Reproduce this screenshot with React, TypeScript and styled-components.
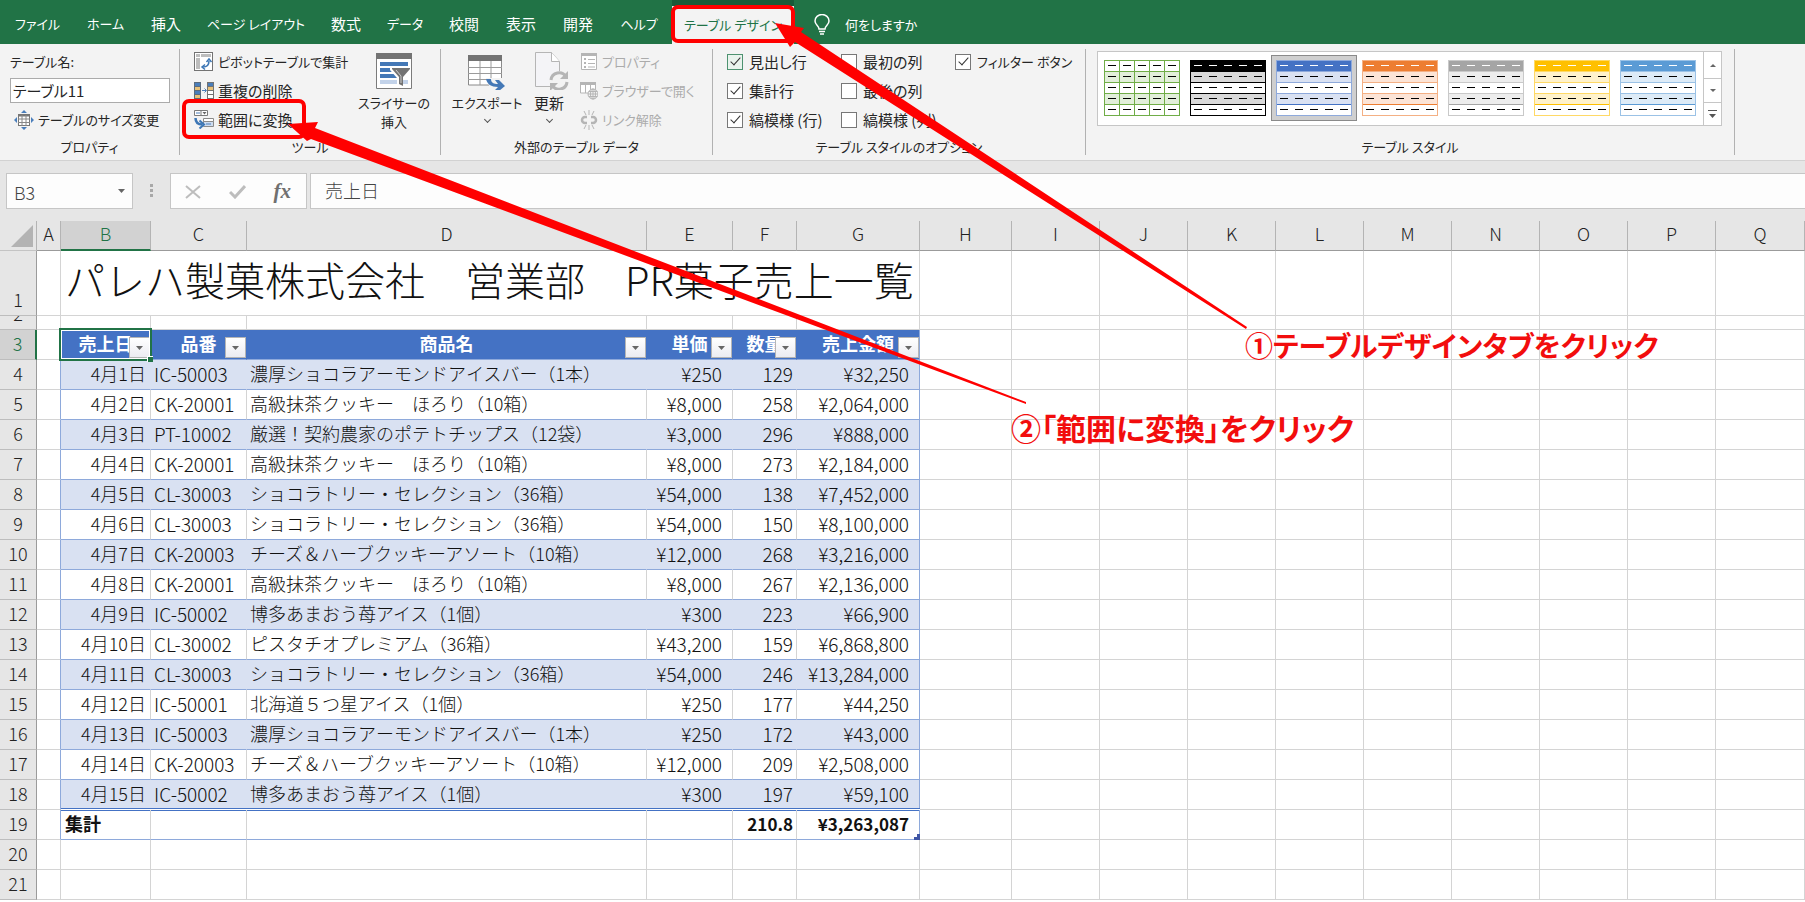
import React from 'react';
import styled, { createGlobalStyle, css } from 'styled-components';

const GlobalStyle = createGlobalStyle`
  *, *::before, *::after { box-sizing: border-box; }
  body {
    margin: 0;
    overflow: hidden;
    font-family: "Noto Sans CJK JP", "Noto Sans", sans-serif;
    color: #262626;
  }
  button, input { font: inherit; color: inherit; }
  button { background: none; border: 0; padding: 0; }
`;

const Workbook = styled.div`
  position: relative;
  display: flex;
  flex-direction: column;
  height: 100vh;
  overflow: hidden;
  background: #fff;
`;

/* ---------- tab strip ---------- */

const TabStrip = styled.nav`
  display: flex;
  flex: none;
  height: 44px;
  padding-left: 2px;
  background: #217346;
  color: #fff;
`;

const uiText = css<{ $kana?: boolean }>`
  font-size: ${(p) => (p.$kana ? 13 : 15)}px;
  font-weight: 400;
  font-feature-settings: "palt";
  white-space: nowrap;
`;

const Tab = styled.button<{ $w: number; $kana?: boolean; $active?: boolean }>`
  ${uiText}
  width: ${(p) => p.$w}px;
  line-height: 37px;
  padding-top: ${(p) => (p.$active ? 0 : 3)}px;
  ${(p) =>
    p.$active &&
    css`
      background: #f3f3f3;
      color: #217346;
      border-top: 6px solid #1b5a38;
      line-height: 32px;
    `}
`;

const TellMe = styled.button`
  ${uiText}
  display: flex;
  align-items: center;
  gap: 15px;
  margin-left: 20px;
  padding-top: 4px;
  font-size: 13px;
`;

/* ---------- ribbon ---------- */

const Ribbon = styled.div`
  display: flex;
  flex: none;
  height: 117px;
  padding-top: 5px;
  background: #f3f3f3;
  border-bottom: 1px solid #d2d2d2;
`;

const Group = styled.section<{ $w: number; $left: number }>`
  display: flex;
  flex-direction: column;
  justify-content: space-between;
  flex: none;
  width: ${(p) => p.$w}px;
  height: 106px;
  padding-left: ${(p) => p.$left}px;
  border-right: 1px solid #b1b1b1;
`;

const GroupBody = styled.div`
  display: flex;
  align-items: flex-start;
`;

const GroupLabel = styled.h2<{ $left: number }>`
  ${uiText}
  margin: 0;
  margin-left: -${(p) => p.$left}px;
  text-align: center;
  font-size: 13px;
  line-height: 16px;
  height: 16px;
`;

const Stack = styled.div<{ $w?: number }>`
  display: flex;
  flex-direction: column;
  width: ${(p) => (p.$w ? p.$w + 'px' : 'auto')};
  margin-top: -2px;
`;

const FieldLabel = styled.label`
  ${uiText}
  line-height: 29px;
  height: 29px;
`;

const NameField = styled.input`
  ${uiText}
  width: 160px;
  height: 25px;
  margin: 2px 0;
  padding: 0 2px;
  font-size: 15px;
  background: #fff;
  border: 1px solid #ababab;
`;

const Command = styled.button<{ $kana?: boolean; $off?: boolean; $indent?: number }>`
  ${uiText}
  display: flex;
  align-items: center;
  gap: 4px;
  height: 29px;
  padding-left: ${(p) => p.$indent || 0}px;
  color: ${(p) => (p.$off ? '#ababab' : '#262626')};
  svg { flex: none; }
`;

const BigCommand = styled.button<{ $w: number; $kana?: boolean }>`
  ${uiText}
  display: flex;
  flex-direction: column;
  align-items: center;
  width: ${(p) => p.$w}px;
  padding-top: 3px;
  line-height: 19px;
  svg { flex: none; margin-bottom: 3px; }
`;

const Chevron = styled.span`
  width: 5px;
  height: 5px;
  margin-top: 5px;
  border: solid #555;
  border-width: 0 1px 1px 0;
  transform: rotate(45deg);
`;

const Option = styled.label<{ $kana?: boolean }>`
  ${uiText}
  display: flex;
  align-items: center;
  gap: 6px;
  height: 29px;
`;

const CheckBox = styled.input<{ $hot?: boolean }>`
  appearance: none;
  display: grid;
  place-items: center;
  width: 16px;
  height: 16px;
  margin: 0;
  background: ${(p) => (p.$hot ? '#e9f3ed' : '#fff')};
  border: 1px solid ${(p) => (p.$hot ? '#4d9270' : '#777')};
  &:checked::after {
    content: "";
    width: 5px;
    height: 10px;
    margin-top: -3px;
    border: solid #333;
    border-width: 0 1px 1px 0;
    transform: rotate(42deg);
  }
`;

const Gallery = styled.div`
  display: flex;
  height: 75px;
  margin-top: 2px;
  background: #fff;
  border: 1px solid #c6c6c6;
`;

const Swatches = styled.div`
  display: flex;
  padding: 3px 2px 0 1px;
`;

const Swatch = styled.button<{ $selected?: boolean }>`
  display: grid;
  place-items: center;
  width: 86px;
  height: 66px;
  border: 1px solid ${(p) => (p.$selected ? '#8a8a8a' : 'transparent')};
  background: ${(p) => (p.$selected ? '#cfcfcf' : 'transparent')};
`;

const GalleryScroll = styled.div`
  display: grid;
  grid-template-rows: 26px 24px 23px;
  width: 18px;
  border-left: 1px solid #c6c6c6;
`;

const ScrollButton = styled.button`
  display: grid;
  place-items: center;
  & + & { border-top: 1px solid #c6c6c6; }
`;

/* ---------- formula bar ---------- */

const FormulaBar = styled.div`
  display: flex;
  flex: none;
  height: 60px;
  padding: 12px 0 12px 6px;
  background: #e6e6e6;
  color: #444;
  font-size: 18px;
  font-weight: 300;
`;

const Box = styled.div`
  display: flex;
  align-items: center;
  background: #fdfdfd;
  border: 1px solid #c6c6c6;
`;

const NameBox = styled(Box)`
  width: 127px;
  padding-right: 7px;
  input {
    flex: 1;
    min-width: 0;
    padding: 2px 0 0 7px;
    border: 0;
    background: none;
  }
`;

const Grip = styled.span`
  width: 3px;
  height: 13px;
  margin: 11px 17px 0 17px;
  background: repeating-linear-gradient(#a8a8a8 0 3px, transparent 3px 5px);
`;

const EditButtons = styled(Box)`
  justify-content: space-between;
  width: 137px;
  margin-right: 3px;
  padding: 0 15px 0 14px;
`;

const FxButton = styled.button`
  font: italic 700 21px/24px "Liberation Serif", serif;
  color: #707070;
`;

const FormulaField = styled.input`
  flex: 1;
  min-width: 0;
  padding: 0 14px 3px;
  background: #fdfdfd;
  border: 1px solid #c6c6c6;
  border-right: 0;
`;

/* ---------- sheet ---------- */

const SheetArea = styled.main`
  flex: 1;
  min-height: 0;
  overflow: hidden;
`;

const Sheet = styled.table`
  width: 100%;
  min-width: 1804px;
  table-layout: fixed;
  border-collapse: separate;
  border-spacing: 0;
  font-size: 18px;
  font-weight: 300;
  color: #111;
  th, td { padding: 0; }
  th { font-weight: inherit; }
`;

const ColHead = styled.th<{ $selected?: boolean }>`
  height: 30px;
  background: ${(p) => (p.$selected ? '#d2d2d2' : '#e6e6e6')};
  color: ${(p) => (p.$selected ? '#217346' : '#222')};
  border-right: 1px solid #b4b4b4;
  border-bottom: ${(p) => (p.$selected ? '2px solid #217346' : '1px solid #9b9b9b')};
  line-height: 25px;
  vertical-align: top;
`;

const Corner = styled.th`
  height: 30px;
  background: #e6e6e6;
  border-right: 1px solid #b4b4b4;
  border-bottom: 1px solid #c4c4c4;
  svg { display: block; margin-left: auto; margin-right: 3px; }
`;

const RowHead = styled.th<{ $selected?: boolean }>`
  background: ${(p) => (p.$selected ? '#d2d2d2' : '#e6e6e6')};
  color: ${(p) => (p.$selected ? '#217346' : '#222')};
  border-right: ${(p) => (p.$selected ? '2px solid #217346' : '1px solid #9b9b9b')};
  border-bottom: 1px solid #bdbdbd;
`;

type Kind = 'plain' | 'head' | 'band' | 'white' | 'last' | 'total';

const Cell = styled.td<{ $kind?: Kind; $edge?: boolean }>`
  position: relative;
  border-right: 1px solid #d4d4d4;
  border-bottom: 1px solid #d4d4d4;
  ${(p) => p.$kind && p.$kind !== 'plain' && css`border-bottom-color: #8ea9db;`}
  ${(p) => p.$kind === 'head' && css`
    background: #4472c4;
    border-right-color: #4472c4;
    color: #fff;
    font-weight: 700;
  `}
  ${(p) => (p.$kind === 'band' || p.$kind === 'last') && css`
    background: #d9e1f2;
    border-right-color: #d9e1f2;
  `}
  ${(p) => p.$kind === 'last' && css`
    &::after {
      content: "";
      position: absolute;
      left: 0;
      right: -1px;
      bottom: -2px;
      height: 3px;
      background: #fff;
      border: solid #4472c4;
      border-width: 1px 0;
    }
  `}
  ${(p) => p.$kind === 'total' && css`font-weight: 700;`}
  ${(p) => p.$edge && css`border-right-color: #8ea9db;`}
`;

const Content = styled.div<{ $h: number; $align?: string; $l?: number; $r?: number; $size?: number }>`
  display: flex;
  align-items: flex-end;
  justify-content: ${(p) => p.$align || 'flex-start'};
  height: ${(p) => p.$h}px;
  padding: 0 ${(p) => p.$r || 0}px 2px ${(p) => p.$l || 0}px;
  font-size: ${(p) => p.$size || 18}px;
  line-height: 27px;
  white-space: nowrap;
  overflow: hidden;
`;

const Title = styled.h1`
  margin: 0;
  height: 64px;
  padding-left: 4px;
  font-size: 40px;
  font-weight: 300;
  line-height: 56px;
  white-space: nowrap;
`;

const FilterButton = styled.button`
  position: absolute;
  right: 0;
  bottom: 1px;
  display: grid;
  place-items: center;
  width: 21px;
  height: 21px;
  background: linear-gradient(#fff, #ececf2);
  border: 1px solid #b5b5b5;
`;

const Selection = styled.span`
  position: absolute;
  inset: -2px;
  z-index: 1;
  border: 2px solid #217346;
  box-shadow: inset 0 0 0 1px #fff;
  pointer-events: none;
  &::after {
    content: "";
    position: absolute;
    right: -3px;
    bottom: -3px;
    width: 6px;
    height: 6px;
    background: #217346;
    border: solid #fff;
    border-width: 1px 0 0 1px;
  }
`;

const ResizeMark = styled.svg`
  position: absolute;
  right: -1px;
  bottom: -1px;
`;

/* ---------- annotations ---------- */

const Annotations = styled.svg`
  position: absolute;
  top: 0;
  left: 0;
  z-index: 2;
  pointer-events: none;
`;

const Callout = styled.p<{ $x: number; $y: number; $size: number }>`
  position: absolute;
  left: ${(p) => p.$x}px;
  top: ${(p) => p.$y}px;
  z-index: 2;
  margin: 0;
  font-size: ${(p) => p.$size}px;
  font-weight: 700;
  line-height: 36px;
  font-feature-settings: "palt";
  white-space: nowrap;
  color: #f20d0d;
`;

/* ---------- icons ---------- */

const DownCaret = ({ w = 7, c = '#666' }: { w?: number; c?: string }) => (
  <svg width={w} height="4" viewBox="0 0 8 4" preserveAspectRatio="none" aria-hidden="true">
    <path d="M0 0h8L4 4z" fill={c} />
  </svg>
);

const ResizeIcon = () => (
  <svg width="20" height="20" viewBox="0 0 20 20" aria-hidden="true">
    <path d="M10 0l3 3H7zM10 20l3-3H7zM0 10l3-3v6zM20 10l-3-3v6z" fill="#4a7ebb" />
    <rect x="4.500" y="4.500" width="11" height="11" fill="#fff" stroke="#777" />
    <path d="M4 5.500h12" stroke="#777" strokeWidth="2" />
    <path d="M8 5v11M12 5v11M4 9h12M4 12.500h12" stroke="#888" fill="none" />
  </svg>
);

const PivotIcon = () => (
  <svg width="20" height="20" viewBox="0 0 20 20" aria-hidden="true">
    <rect x="0.500" y="0.500" width="18" height="18" fill="#fff" stroke="#737373" />
    <path d="M2 2h4v3H2zM7 2h10v3H7zM2 6h4v11H2z" fill="#bdbdbd" />
    <path d="M9 15c4 0 6-2 6-6" fill="none" stroke="#3c76b5" strokeWidth="1.500" />
    <path d="M12.500 10l2.500-3 2.500 3M11 12.500L8 15l3 2.500" fill="none" stroke="#3c76b5" strokeWidth="1.500" />
  </svg>
);

const DuplicateIcon = () => (
  <svg width="20" height="17" viewBox="0 0 20 17" aria-hidden="true">
    <path d="M0 0h7v17H0z" fill="#5b6b7d" />
    <path d="M1 1h5v3H1zM1 9h5v3H1z" fill="#4a7ebb" />
    <path d="M1 5h5v3H1zM1 13h5v3H1z" fill="#e8c27a" />
    <path d="M8 8.500h4M10.500 6.500l2 2-2 2" stroke="#4a7ebb" fill="none" />
    <path d="M13 0h7v17h-7z" fill="#737373" />
    <path d="M14 1h5v3h-5z" fill="#4a7ebb" />
    <path d="M14 5h5v3h-5z" fill="#e8c27a" />
    <path d="M14 9h5v3h-5zM14 13h5v3h-5z" fill="#fff" />
  </svg>
);

const ConvertIcon = () => (
  <svg width="20" height="19" viewBox="0 0 20 19" aria-hidden="true">
    <path d="M.5.5h13v5H.5zM7 .5v5" fill="#fff" stroke="#7b7b7b" />
    <path d="M2 3h4" stroke="#4a7ebb" />
    <path d="M8.500 2h4l-2 2.500z" fill="#666" />
    <path d="M9.500 8.500h10v3h-10z" fill="#fff" stroke="#8a8a8a" />
    <path d="M9.500 11.500h10v5h-10z" fill="#cddcf0" stroke="#8a8a8a" />
    <path d="M12 14h5" stroke="#4a7ebb" />
    <path d="M1.500 8c0 4.500 2 6.500 7 6.500" fill="none" stroke="#3c76b5" strokeWidth="2.500" />
    <path d="M5.500 10.500l4.500 4-4.500 4" fill="none" stroke="#3c76b5" strokeWidth="2" />
  </svg>
);

const SlicerIcon = () => (
  <svg width="36" height="38" viewBox="0 -1 36 38" aria-hidden="true">
    <path d="M.5.5h35v35H.5z" fill="#fff" stroke="#7b7b7b" />
    <path d="M0 0h36v6H0z" fill="#737373" />
    <path d="M4 9h28v4H4zM4 15h14v4H4zM4 21h17v4H4z" fill="#4478b6" />
    <path d="M4 27h28v4H4z" fill="#c3d3ea" />
    <path d="M14 15h21v2l-8 8v10l-6-4v-6l-7-8z" fill="#fff" />
    <path d="M16 15h18v1l-7 8v9l-4-2v-7l-7-8z" fill="#737373" />
    <path d="M20 17l5 6v7" stroke="#ccc" fill="none" />
  </svg>
);

const ExportIcon = () => (
  <svg width="38" height="38" viewBox="0 -1 38 38" aria-hidden="true">
    <path d="M.5 6h33v26H.5z" fill="#fff" stroke="#8a8a8a" />
    <path d="M0 2h34v6H0z" fill="#737373" />
    <path d="M12 8v24M23 8v24M0 14.500h34M0 20.500h34M0 26.500h34" stroke="#9b9b9b" fill="none" />
    <path d="M18 25h16v10H22z" fill="#f3f3f3" />
    <path d="M18 26h5c0 4 3 5 7 5l-3-4h4l6 6-6 5-4-1 3-3c-7 0-11-3-12-8z" fill="#4478b6" />
  </svg>
);

const RefreshIcon = () => (
  <svg width="40" height="38" viewBox="-6 0 40 38" aria-hidden="true">
    <path d="M.5.500h16l8 9v25H.5z" fill="#f4f4f7" stroke="#b5b5b5" />
    <path d="M16.500.500v9h8" fill="#fff" stroke="#b5b5b5" />
    <circle cx="24" cy="29" r="10" fill="#f3f3f3" />
    <path d="M16 28a8 8 0 0 1 15-3M32 30a8 8 0 0 1-15 3" fill="none" stroke="#b5b5b5" strokeWidth="3" />
    <path d="M33 19v8h-8zM15 39v-8h8z" fill="#b5b5b5" />
  </svg>
);

const PropertiesIcon = () => (
  <svg width="18" height="19" viewBox="0 0 18 19" aria-hidden="true">
    <path d="M1.500 1.500h15v16h-15z" fill="#fff" stroke="#b5b5b5" />
    <path d="M1 1h16v3H1z" fill="#b5b5b5" />
    <path d="M8 7.500h7M8 11.500h7M8 15h7" stroke="#b5b5b5" />
    <path d="M4 6h2v2H4zM4 10h2v2H4zM4 14h2v2H4z" fill="#b5b5b5" />
  </svg>
);

const BrowserIcon = () => (
  <svg width="18" height="19" viewBox="0 0 18 19" aria-hidden="true">
    <path d="M.5 2h15v10H.5zM5.500 3v9M10.500 3v9" fill="#fff" stroke="#b5b5b5" />
    <path d="M0 1h16v3H0z" fill="#b5b5b5" />
    <circle cx="13" cy="13" r="5" fill="#f3f3f3" stroke="#b5b5b5" />
    <path d="M8 13h10M13 8v10M9 10.500h8M9 15.500h8" stroke="#b5b5b5" fill="none" />
    <ellipse cx="13" cy="13" rx="2.500" ry="5" stroke="#b5b5b5" fill="none" />
  </svg>
);

const UnlinkIcon = () => (
  <svg width="18" height="20" viewBox="0 0 18 20" aria-hidden="true">
    <path d="M7 7H5a3 3 0 0 0 0 6h2M11 7h2a3 3 0 0 1 0 6h-2" fill="none" stroke="#b5b5b5" strokeWidth="2.500" />
    <path d="M9 0v5M9 15v5M4 1l2 4M14 1l-2 4M4 19l2-4M14 19l-2-4" stroke="#b5b5b5" fill="none" />
  </svg>
);

const BulbIcon = () => (
  <svg width="16" height="21" viewBox="0 0 16 21" fill="none" stroke="#fff" strokeWidth="1.500" aria-hidden="true">
    <path d="M5 15c0-3-4-4-4-8a7 6.500 0 0 1 14 0c0 4-4 5-4 8z" />
    <path d="M5 17.500h6M6 20h4" />
  </svg>
);

interface Palette { name: string; head: string; band: string; line: string; foot: string; dash: string; grid?: boolean }

const palettes: Palette[] = [
  { name: '緑', head: '#fff', band: '#e2efda', line: '#70ad47', foot: '#70ad47', dash: '#000', grid: true },
  { name: '黒', head: '#000', band: '#d9d9d9', line: '#000', foot: '#000', dash: '#fff' },
  { name: '青', head: '#4472c4', band: '#d9e1f2', line: '#8ea9db', foot: '#4472c4', dash: '#fff' },
  { name: 'オレンジ', head: '#ed7d31', band: '#fce4d6', line: '#f4b084', foot: '#ed7d31', dash: '#fff' },
  { name: '灰色', head: '#a5a5a5', band: '#ededed', line: '#c9c9c9', foot: '#a5a5a5', dash: '#fff' },
  { name: '金色', head: '#ffc000', band: '#fff2cc', line: '#ffd966', foot: '#ffc000', dash: '#fff' },
  { name: '水色', head: '#5b9bd5', band: '#ddebf7', line: '#9bc2e6', foot: '#5b9bd5', dash: '#fff' },
];

const five = [0, 1, 2, 3, 4];

const StyleThumb = ({ p }: { p: Palette }) => (
  <svg width="76" height="56" viewBox="0 0 76 56" shapeRendering="crispEdges" aria-hidden="true">
    <rect width="76" height="56" fill="#fff" />
    <rect width="76" height="11" fill={p.head} />
    <rect y="11" width="76" height="11" fill={p.band} />
    <rect y="33" width="76" height="11" fill={p.band} />
    <path d="M0 11.500h76M0 22.500h76M0 33.500h76" stroke={p.line} />
    <path d="M0 44.500h76" stroke={p.foot} />
    {p.grid && <path d="M15.500 0v56M30.500 0v56M45.500 0v56M60.500 0v56" stroke={p.line} />}
    <rect x="0.500" y="0.500" width="75" height="55" fill="none" stroke={p.line} />
    {five.map((r) =>
      five.map((c) => (
        <rect key={`${r}-${c}`} x={4 + c * 15} y={5 + r * 11} width="8" height="1" fill={r === 0 ? p.dash : '#000'} />
      ))
    )}
  </svg>
);

/* ---------- data ---------- */

const tabs: { label: string; w: number; kana?: boolean; active?: boolean }[] = [
  { label: 'ファイル', w: 71, kana: true },
  { label: 'ホーム', w: 65, kana: true },
  { label: '挿入', w: 56 },
  { label: 'ページ レイアウト', w: 124, kana: true },
  { label: '数式', w: 56 },
  { label: 'データ', w: 62, kana: true },
  { label: '校閲', w: 56 },
  { label: '表示', w: 58 },
  { label: '開発', w: 56 },
  { label: 'ヘルプ', w: 66, kana: true },
  { label: 'テーブル デザイン', w: 122, kana: true, active: true },
];

/* The last column has no width of its own and takes the rest of the window. */
const columns: [string, number?][] = [
  ['A', 24], ['B', 90], ['C', 96], ['D', 400], ['E', 86], ['F', 64], ['G', 123], ['H', 92],
  ['I', 88], ['J', 88], ['K', 88], ['L', 88], ['M', 88], ['N', 88], ['O', 88], ['P', 88], ['Q'],
];
const outside = columns.slice(7).map(([name]) => name);

const headings = ['売上日', '品番', '商品名', '単価', '数量', '売上金額'];

const sales = [
  ['4月1日', 'IC-50003', '濃厚ショコラアーモンドアイスバー（1本）', '¥250', '129', '¥32,250'],
  ['4月2日', 'CK-20001', '高級抹茶クッキー　ほろり（10箱）', '¥8,000', '258', '¥2,064,000'],
  ['4月3日', 'PT-10002', '厳選！契約農家のポテトチップス（12袋）', '¥3,000', '296', '¥888,000'],
  ['4月4日', 'CK-20001', '高級抹茶クッキー　ほろり（10箱）', '¥8,000', '273', '¥2,184,000'],
  ['4月5日', 'CL-30003', 'ショコラトリー・セレクション（36箱）', '¥54,000', '138', '¥7,452,000'],
  ['4月6日', 'CL-30003', 'ショコラトリー・セレクション（36箱）', '¥54,000', '150', '¥8,100,000'],
  ['4月7日', 'CK-20003', 'チーズ＆ハーブクッキーアソート（10箱）', '¥12,000', '268', '¥3,216,000'],
  ['4月8日', 'CK-20001', '高級抹茶クッキー　ほろり（10箱）', '¥8,000', '267', '¥2,136,000'],
  ['4月9日', 'IC-50002', '博多あまおう苺アイス（1個）', '¥300', '223', '¥66,900'],
  ['4月10日', 'CL-30002', 'ピスタチオプレミアム（36箱）', '¥43,200', '159', '¥6,868,800'],
  ['4月11日', 'CL-30003', 'ショコラトリー・セレクション（36箱）', '¥54,000', '246', '¥13,284,000'],
  ['4月12日', 'IC-50001', '北海道５つ星アイス（1個）', '¥250', '177', '¥44,250'],
  ['4月13日', 'IC-50003', '濃厚ショコラアーモンドアイスバー（1本）', '¥250', '172', '¥43,000'],
  ['4月14日', 'CK-20003', 'チーズ＆ハーブクッキーアソート（10箱）', '¥12,000', '209', '¥2,508,000'],
  ['4月15日', 'IC-50002', '博多あまおう苺アイス（1個）', '¥300', '197', '¥59,100'],
];

const layouts = [
  { align: 'flex-end', r: 4, size: 18 },
  { l: 3, size: 19 },
  { l: 3, size: 18 },
  { align: 'flex-end', r: 10, size: 19 },
  { align: 'flex-end', r: 3, size: 19 },
  { align: 'flex-end', r: 10, size: 19 },
];

const totalLayouts = layouts.map((l, i) =>
  i === 0 ? { align: 'flex-start', l: 4, size: 18 } : { ...l, size: 17 }
);

/* ---------- sheet rows ---------- */

const RowNumber = ({ n, h = 29, selected }: { n: number; h?: number; selected?: boolean }) => (
  <RowHead scope="row" $selected={selected}>
    <Content $h={h} $align="center">{n}</Content>
  </RowHead>
);

const Outside = () => <>{outside.map((c) => <Cell key={c} />)}</>;

const DataRow = ({ n, values, kind }: { n: number; values: string[]; kind: Kind }) => {
  const set: { align?: string; l?: number; r?: number; size: number }[] = kind === 'total' ? totalLayouts : layouts;
  return (
    <tr>
      <RowNumber n={n} />
      <Cell $edge />
      {values.map((v, i) => (
        <Cell key={i} $kind={kind} $edge={i === 5}>
          <Content $h={29} $align={set[i].align} $l={set[i].l} $r={set[i].r} $size={set[i].size}>{v}</Content>
          {kind === 'total' && i === 5 && (
            <ResizeMark width="6" height="6" viewBox="0 0 6 6" aria-hidden="true">
              <path d="M6 0v6H0V3h3V0z" fill="#3f55a5" />
            </ResizeMark>
          )}
        </Cell>
      ))}
      <Outside />
    </tr>
  );
};

const BlankRow = ({ n, h = 29 }: { n: number; h?: number }) => (
  <tr>
    <RowNumber n={n} h={h} />
    {columns.map(([c]) => <Cell key={c} />)}
  </tr>
);

const Check = ({ label, kana, on, hot }: { label: string; kana?: boolean; on?: boolean; hot?: boolean }) => (
  <Option $kana={kana}>
    <CheckBox type="checkbox" defaultChecked={on} $hot={hot} />
    {label}
  </Option>
);

export default function App() {
  return (
    <Workbook>
      <GlobalStyle />
      <TabStrip>
        {tabs.map((t) => (
          <Tab key={t.label} $w={t.w} $kana={t.kana} $active={t.active}>{t.label}</Tab>
        ))}
        <TellMe><BulbIcon />何をしますか</TellMe>
      </TabStrip>

      <Ribbon>
        <Group $w={180} $left={10}>
          <Stack>
            <FieldLabel htmlFor="table-name" $kana>テーブル名:</FieldLabel>
            <NameField id="table-name" defaultValue="テーブル11" $kana />
            <Command $kana $indent={4}><ResizeIcon />テーブルのサイズ変更</Command>
          </Stack>
          <GroupLabel $left={10}>プロパティ</GroupLabel>
        </Group>

        <Group $w={261} $left={14}>
          <GroupBody>
            <Stack $w={166}>
              <Command $kana><PivotIcon />ピボットテーブルで集計</Command>
              <Command><DuplicateIcon />重複の削除</Command>
              <Command><ConvertIcon />範囲に変換</Command>
            </Stack>
            <BigCommand $w={68} $kana>
              <SlicerIcon />
              <span>スライサーの<br />挿入</span>
            </BigCommand>
          </GroupBody>
          <GroupLabel $left={14}>ツール</GroupLabel>
        </Group>

        <Group $w={272} $left={10}>
          <GroupBody>
            <BigCommand $w={72} $kana>
              <ExportIcon />
              <span>エクスポート</span>
              <Chevron />
            </BigCommand>
            <BigCommand $w={52}>
              <RefreshIcon />
              <span>更新</span>
              <Chevron />
            </BigCommand>
            <Stack>
              <Command $kana $off $indent={5}><PropertiesIcon />プロパティ</Command>
              <Command $kana $off $indent={5}><BrowserIcon />ブラウザーで開く</Command>
              <Command $kana $off $indent={5}><UnlinkIcon />リンク解除</Command>
            </Stack>
          </GroupBody>
          <GroupLabel $left={10}>外部のテーブル データ</GroupLabel>
        </Group>

        <Group $w={373} $left={14}>
          <GroupBody>
            <Stack $w={114}>
              <Check label="見出し行" on hot />
              <Check label="集計行" on />
              <Check label="縞模様 (行)" on />
            </Stack>
            <Stack $w={114}>
              <Check label="最初の列" />
              <Check label="最後の列" />
              <Check label="縞模様 (列)" />
            </Stack>
            <Stack>
              <Check label="フィルター ボタン" kana on />
            </Stack>
          </GroupBody>
          <GroupLabel $left={14}>テーブル スタイルのオプション</GroupLabel>
        </Group>

        <Group $w={649} $left={11}>
          <GroupBody>
            <Gallery>
              <Swatches>
                {palettes.map((p, i) => (
                  <Swatch key={p.name} aria-label={p.name} $selected={i === 2}><StyleThumb p={p} /></Swatch>
                ))}
              </Swatches>
              <GalleryScroll>
                <ScrollButton aria-label="上へ">
                  <svg width="6" height="3" viewBox="0 0 6 3"><path d="M3 0l3 3H0z" fill="#666" /></svg>
                </ScrollButton>
                <ScrollButton aria-label="下へ">
                  <svg width="6" height="3" viewBox="0 0 6 3"><path d="M0 0h6L3 3z" fill="#666" /></svg>
                </ScrollButton>
                <ScrollButton aria-label="その他">
                  <svg width="9" height="8" viewBox="0 0 9 8"><path d="M0 0h9v1H0zM1 4h7L4.500 8z" fill="#555" /></svg>
                </ScrollButton>
              </GalleryScroll>
            </Gallery>
          </GroupBody>
          <GroupLabel $left={11}>テーブル スタイル</GroupLabel>
        </Group>
      </Ribbon>

      <FormulaBar>
        <NameBox>
          <input aria-label="名前ボックス" defaultValue="B3" />
          <DownCaret />
        </NameBox>
        <Grip />
        <EditButtons>
          <button aria-label="キャンセル">
            <svg width="16" height="14" viewBox="0 0 16 14"><path d="M1 1l14 12M15 1L1 13" stroke="#bdbdbd" strokeWidth="2" /></svg>
          </button>
          <button aria-label="入力">
            <svg width="17" height="14" viewBox="0 0 17 14"><path d="M1 7l5 5L16 1" fill="none" stroke="#bdbdbd" strokeWidth="3" /></svg>
          </button>
          <FxButton aria-label="関数の挿入">fx</FxButton>
        </EditButtons>
        <FormulaField aria-label="数式バー" defaultValue="売上日" />
      </FormulaBar>

      <SheetArea>
        <Sheet>
          <colgroup>
            <col width="37" />
            {columns.map(([name, w]) => <col key={name} width={w} />)}
          </colgroup>
          <thead>
            <tr>
              <Corner>
                <svg width="22" height="22" viewBox="0 0 22 22" aria-hidden="true"><path d="M22 0v22H0z" fill="#b3b3b3" /></svg>
              </Corner>
              {columns.map(([name]) => <ColHead key={name} scope="col" $selected={name === 'B'}>{name}</ColHead>)}
            </tr>
          </thead>
          <tbody>
            <tr>
              <RowNumber n={1} h={64} />
              <Cell />
              <Cell colSpan={6}><Title>パレハ製菓株式会社　営業部　PR菓子売上一覧</Title></Cell>
              <Outside />
            </tr>
            <BlankRow n={2} h={13} />
            <tr>
              <RowNumber n={3} selected />
              <Cell $edge />
              {headings.map((h, i) => (
                <Cell key={h} $kind="head" $edge={i === 5}>
                  <Content $h={29} $align="center">{h}</Content>
                  <FilterButton aria-label={`${h}のフィルター`}><DownCaret /></FilterButton>
                  {i === 0 && <Selection />}
                </Cell>
              ))}
              <Outside />
            </tr>
            {sales.map((values, i) => (
              <DataRow
                key={i}
                n={i + 4}
                values={values}
                kind={i === sales.length - 1 ? 'last' : i % 2 ? 'white' : 'band'}
              />
            ))}
            <DataRow n={19} values={['集計', '', '', '', '210.8', '¥3,263,087']} kind="total" />
            <BlankRow n={20} />
            <BlankRow n={21} />
          </tbody>
        </Sheet>
      </SheetArea>

      <Annotations width="1300" height="420" viewBox="0 0 1300 420" aria-hidden="true">
        <g fill="none" stroke="#f00" strokeWidth="4">
          <rect x="673" y="7" width="120" height="34" rx="5" />
          <rect x="184" y="101" width="120" height="36" rx="5" />
        </g>
        <path d="M775 23L804 28L801 32L1247 327L1246 329L795 42L790 47z" fill="#f00" />
        <path d="M288 124L318 122L315 128L1026 402L1026 404L311 139L307 141z" fill="#f00" />
      </Annotations>
      <Callout $x={1245} $y={327} $size={28}>①テーブルデザインタブをクリック</Callout>
      <Callout $x={1011} $y={409} $size={30}>②「範囲に変換」をクリック</Callout>
    </Workbook>
  );
}
